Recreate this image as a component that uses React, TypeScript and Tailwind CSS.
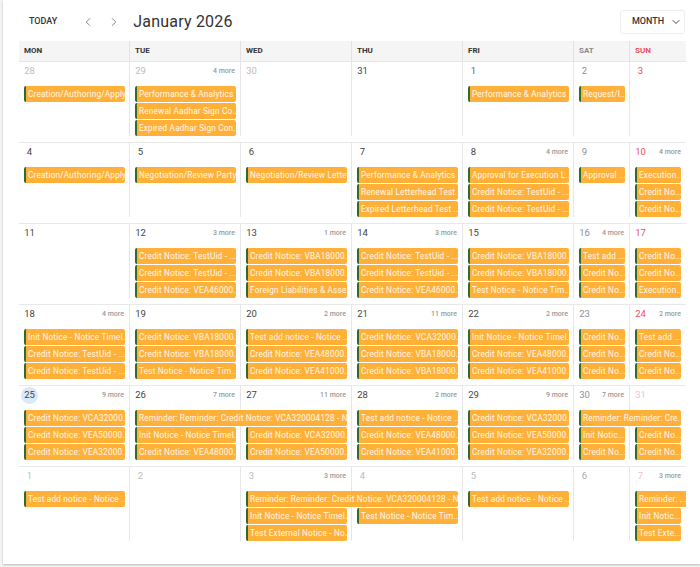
import React from 'react';
import { ChevronDown, ChevronLeft, ChevronRight } from 'lucide-react';

const colStart = ['col-start-1', 'col-start-2', 'col-start-3', 'col-start-4', 'col-start-5', 'col-start-6', 'col-start-7'];
const rowStart = ['row-start-2', 'row-start-3', 'row-start-4'];

const dark = 'text-[#444]';
const faded = 'text-[#bdbdbd]';
const sat = 'text-[#8f8f8f]';
const red = 'text-[#e8505b]';
const pink = 'text-[#f5c0c5]';

const headers = [
  { label: 'MON', color: 'text-[#333]' },
  { label: 'TUE', color: 'text-[#333]' },
  { label: 'WED', color: 'text-[#333]' },
  { label: 'THU', color: 'text-[#333]' },
  { label: 'FRI', color: 'text-[#333]' },
  { label: 'SAT', color: 'text-[#8a8a8a]' },
  { label: 'SUN', color: 'text-[#e8505b]' },
];

const TU = 'Credit Notice: TestUid - ...';
const VBA = 'Credit Notice: VBA18000...';
const VCA = 'Credit Notice: VCA32000...';
const VEA5 = 'Credit Notice: VEA50000...';
const VEA3 = 'Credit Notice: VEA32000...';
const VEA4 = 'Credit Notice: VEA48000...';
const VEA41 = 'Credit Notice: VEA41000...';
const VEA46 = 'Credit Notice: VEA46000...';
const ADD = 'Test add notice - Notice ...';
const INIT = 'Init Notice - Notice Timel...';
const TIM = 'Test Notice - Notice Tim...';
const NO = 'Credit No...';
const PERF = 'Performance & Analytics ...';
const CREATE = 'Creation/Authoring/Apply...';

type Ev = { col: number; row: number; text: string; wide?: boolean; bleed?: boolean };
type Day = { n: number; color: string; more?: string; today?: boolean };

const cell = (col: number, texts: string[], from = 0): Ev[] =>
  texts.map((text, i) => ({ col, row: i + from, text }));

const weeks: { days: Day[]; events: Ev[] }[] = [
  {
    days: [
      { n: 28, color: faded },
      { n: 29, color: faded, more: '4 more' },
      { n: 30, color: faded },
      { n: 31, color: dark },
      { n: 1, color: 'text-[#666]' },
      { n: 2, color: sat },
      { n: 3, color: red },
    ],
    events: [
      ...cell(0, [CREATE]),
      ...cell(1, [PERF, 'Renewal Aadhar Sign Co...', 'Expired Aadhar Sign Con...']),
      ...cell(4, [PERF]),
      ...cell(5, ['Request/I...']),
    ],
  },
  {
    days: [
      { n: 4, color: dark },
      { n: 5, color: dark },
      { n: 6, color: dark },
      { n: 7, color: dark },
      { n: 8, color: dark, more: '4 more' },
      { n: 9, color: sat },
      { n: 10, color: red, more: '4 more' },
    ],
    events: [
      ...cell(0, [CREATE]),
      ...cell(1, ['Negotiation/Review Party...']),
      ...cell(2, ['Negotiation/Review Lette...']),
      ...cell(3, [PERF, 'Renewal Letterhead Test ...', 'Expired Letterhead Test ...']),
      ...cell(4, ['Approval for Execution L...', TU, TU]),
      ...cell(5, ['Approval ...']),
      ...cell(6, ['Execution...', NO, NO]),
    ],
  },
  {
    days: [
      { n: 11, color: dark },
      { n: 12, color: dark, more: '3 more' },
      { n: 13, color: dark, more: '1 more' },
      { n: 14, color: dark, more: '3 more' },
      { n: 15, color: dark },
      { n: 16, color: sat, more: '4 more' },
      { n: 17, color: red },
    ],
    events: [
      ...cell(1, [TU, TU, VEA46]),
      ...cell(2, [VBA, VBA, 'Foreign Liabilities & Asse...']),
      ...cell(3, [TU, TU, VEA46]),
      ...cell(4, [VBA, VBA, TIM]),
      ...cell(5, ['Test add ...', NO, NO]),
      ...cell(6, [NO, NO, 'Execution...']),
    ],
  },
  {
    days: [
      { n: 18, color: dark, more: '4 more' },
      { n: 19, color: dark },
      { n: 20, color: dark, more: '2 more' },
      { n: 21, color: dark, more: '11 more' },
      { n: 22, color: dark, more: '2 more' },
      { n: 23, color: sat },
      { n: 24, color: red, more: '2 more' },
    ],
    events: [
      ...cell(0, [INIT, TU, TU]),
      ...cell(1, [VBA, VBA, TIM]),
      ...cell(2, [ADD, VEA4, VEA41]),
      ...cell(3, [VCA, VBA, VBA]),
      ...cell(4, [INIT, VEA4, VEA41]),
      ...cell(5, [NO, NO, NO]),
      ...cell(6, ['Test add ...', NO, NO]),
    ],
  },
  {
    days: [
      { n: 25, color: dark, more: '9 more', today: true },
      { n: 26, color: dark, more: '7 more' },
      { n: 27, color: dark, more: '11 more' },
      { n: 28, color: dark, more: '2 more' },
      { n: 29, color: dark, more: '9 more' },
      { n: 30, color: sat, more: '7 more' },
      { n: 31, color: pink },
    ],
    events: [
      ...cell(0, [VCA, VEA5, VEA3]),
      { col: 1, row: 0, text: 'Reminder: Reminder: Credit Notice: VCA320004128 - No...', wide: true },
      ...cell(1, [INIT, VEA4], 1),
      ...cell(2, [VCA, VEA5], 1),
      ...cell(3, [ADD, VEA4, VEA41]),
      ...cell(4, [VCA, VEA5, VEA3]),
      { col: 5, row: 0, text: 'Reminder: Reminder: Cre...', wide: true },
      ...cell(5, ['Init Notic...', NO], 1),
      ...cell(6, [NO, NO], 1),
    ],
  },
  {
    days: [
      { n: 1, color: faded },
      { n: 2, color: faded },
      { n: 3, color: faded, more: '3 more' },
      { n: 4, color: faded },
      { n: 5, color: faded },
      { n: 6, color: 'text-[#aaa]' },
      { n: 7, color: pink, more: '3 more' },
    ],
    events: [
      ...cell(0, [ADD]),
      { col: 2, row: 0, text: 'Reminder: Reminder: Credit Notice: VCA320004128 - No...', wide: true },
      ...cell(2, [INIT, 'Test External Notice - No...'], 1),
      ...cell(3, [TIM], 1),
      ...cell(4, [ADD]),
      { col: 6, row: 0, text: 'Reminder: ...', bleed: true },
      ...cell(6, ['Init Notic...', 'Test Exte...'], 1),
    ],
  },
];

const gridCols = 'grid grid-cols-[repeat(5,111px)_repeat(2,56px)]';

const EventChip = ({ ev }: { ev: Ev }) => (
  <div
    className={`${colStart[ev.col]} ${rowStart[ev.row]} ${ev.wide ? 'col-span-2' : ''} ${
      ev.bleed ? 'ml-[5px] rounded-l-[2px]' : 'mx-[5px] rounded-[2px]'
    } z-10 h-4 overflow-hidden whitespace-nowrap border-l-2 border-[#2f6b2f] bg-[#ffb038] pl-0.5 text-[8.2px] leading-4 tracking-[0.2px] text-white/90`}
  >
    {ev.text}
  </div>
);

export default function App() {
  return (
    <div className="h-[567px] w-[700px] overflow-hidden bg-[#f4f4f4] pb-[3px] pl-[3px] font-['Roboto',sans-serif]">
      <div className="h-full bg-white shadow-[0_1px_2px_rgba(0,0,0,0.25)]">
        {/* Toolbar */}
        <div className="flex h-[41px] items-center pl-[26px] pr-[15px] pt-[3px]">
          <button className="text-[9px] font-medium text-[#333]">TODAY</button>
          <ChevronLeft className="ml-6 h-3.5 w-3.5 text-[#777]" strokeWidth={1.5} />
          <ChevronRight className="ml-3 h-3.5 w-3.5 text-[#777]" strokeWidth={1.5} />
          <h1 className="ml-3 text-base font-normal tracking-[0.2px] text-[#333]">January 2026</h1>
          <button className="ml-auto flex h-6 w-[65px] items-center rounded-[3px] border border-[#eee] pl-[11px] text-[9px] font-medium text-[#333]">
            MONTH
            <ChevronDown className="ml-[6px] h-3 w-3 text-[#444]" strokeWidth={2} />
          </button>
        </div>

        {/* Calendar */}
        <div className="ml-4 w-[667px]">
          <div className={`${gridCols} h-[21px] border-b border-[#e6e6e6] bg-[#f5f5f5]`}>
            {headers.map((h, i) => (
              <div
                key={h.label}
                className={`flex items-center pl-[5px] text-[8px] font-bold ${h.color} ${i < 6 ? 'border-r border-[#e2e2e2]' : ''}`}
              >
                {h.label}
              </div>
            ))}
          </div>

          {weeks.map((week, w) => (
            <div
              key={w}
              className={`${gridCols} grid-rows-[23px_16px_16px_16px] gap-y-px ${
                w === 5 ? 'h-[83px]' : 'h-[81px] border-b border-[#e9e9e9]'
              }`}
            >
              {week.days.map((day, d) => (
                <div
                  key={d}
                  className={`${colStart[d]} row-start-1 row-span-4 flex h-full items-start justify-between pl-[2px] pr-[5px] ${
                    d < 6 ? 'border-r border-[#e6e6e6]' : ''
                  }`}
                >
                  <span
                    className={`mt-[1px] flex h-[17px] w-[17px] items-center justify-center rounded-full text-[9.5px] ${day.color} ${
                      day.today ? 'bg-[#d9e9f7]' : ''
                    }`}
                  >
                    {day.n}
                  </span>
                  {day.more && (
                    <span className="mt-[1px] text-[7px] font-medium leading-[17px] text-[#999]">{day.more}</span>
                  )}
                </div>
              ))}
              {week.events.map((ev, i) => (
                <EventChip key={i} ev={ev} />
              ))}
            </div>
          ))}
        </div>
      </div>
    </div>
  );
}
